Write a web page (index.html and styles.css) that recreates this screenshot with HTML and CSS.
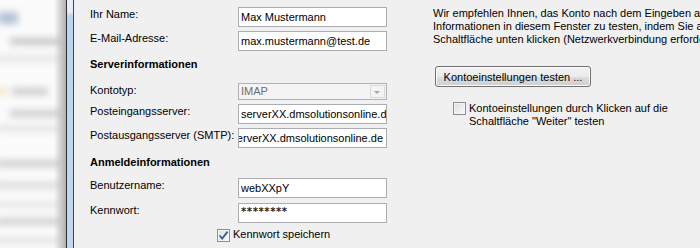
FILE: index.html
```html
<!DOCTYPE html>
<html lang="de">
<head>
    <meta charset="UTF-8">
    <meta name="viewport" content="width=device-width, initial-scale=1.0">
    <title>Kontoeinstellungen</title>
    <link rel="stylesheet" href="styles.css">
</head>
<body>
    <div class="sidebar">
        <div class="blur b1"></div>
        <div class="blur b2"></div>
        <div class="blur b3"></div>
        <div class="blur b4"></div>
        <div class="blur b5"></div>
        <div class="blur b6"></div>
        <div class="blur b7"></div>
        <div class="blur b8"></div>
        <div class="blur b9"></div>
        <div class="blur b10"></div>
        <div class="blur b11"></div>
        <div class="blur b12"></div>
        <div class="edge"></div>
    </div>
    <div class="frame"></div>

    <div class="dialog">
        <div class="form">
            <div class="row first">
                <label>Ihr Name:</label>
                <div class="field">Max Mustermann</div>
            </div>
            <div class="row">
                <label>E-Mail-Adresse:</label>
                <div class="field">max.mustermann@test.de</div>
            </div>

            <h2 class="heading">Serverinformationen</h2>
            <div class="row row-select">
                <label>Kontotyp:</label>
                <div class="combo">
                    <span>IMAP</span>
                    <span class="combo-btn"></span>
                </div>
            </div>
            <div class="row">
                <label>Posteingangsserver:</label>
                <div class="field">serverXX.dmsolutionsonline.de</div>
            </div>
            <div class="row">
                <label>Postausgangsserver (SMTP):</label>
                <div class="field scrolled">serverXX.dmsolutionsonline.de</div>
            </div>

            <h2 class="heading heading-2">Anmeldeinformationen</h2>
            <div class="row row-user">
                <label>Benutzername:</label>
                <div class="field">webXXpY</div>
            </div>
            <div class="row row-pass">
                <label>Kennwort:</label>
                <div class="field password">********</div>
            </div>
            <div class="check-row save">
                <span class="checkbox checked">
                    <svg width="11" height="11" viewBox="0 0 11 11">
                        <path d="M1.5 5.5 L4.2 8.6 L9.6 1.6" fill="none" stroke="#3a5c93" stroke-width="1.8"/>
                    </svg>
                </span>
                <span>Kennwort speichern</span>
            </div>
        </div>

        <div class="test">
            <p class="hint">Wir empfehlen Ihnen, das Konto nach dem Eingeben aller<br>Informationen in diesem Fenster zu testen, indem Sie auf die<br>Schaltfläche unten klicken (Netzwerkverbindung erforderlich).</p>
            <button class="test-btn">Kontoeinstellungen testen ...</button>
            <div class="check-row next">
                <span class="checkbox"></span>
                <span>Kontoeinstellungen durch Klicken auf die<br>Schaltfläche "Weiter" testen</span>
            </div>
        </div>
    </div>
</body>
</html>
```

FILE: styles.css
```css
body {
    margin: 0;
    height: 248px;
    overflow: hidden;
    display: flex;
    background-color: #f0f0f0;
    font-family: 'Liberation Sans', Arial, sans-serif;
    font-size: 11px;
    color: #000;
}

/* blurred window behind the dialog */
.sidebar {
    position: relative;
    width: 66px;
    flex-shrink: 0;
    background-color: #fbfbfb;
    overflow: hidden;
}

.blur {
    position: absolute;
    height: 7px;
    filter: blur(3.5px);
}

.b1 { left: -2px; top: 12px; width: 20px; height: 12px; background-color: #b2c1d3; }
.b2 { left: 10px; top: 38px; width: 60px; background-color: #c6c6c6; }
.b3 { left: -4px; top: 55px; width: 66px; background-color: #e6e6e6; }
.b4 { left: -2px; top: 88px; width: 8px; background-color: #eee2b4; }
.b5 { left: 12px; top: 88px; width: 36px; background-color: #cbcbcb; }
.b6 { left: 10px; top: 110px; width: 60px; background-color: #cdcdcd; }
.b7 { left: -4px; top: 125px; width: 66px; background-color: #e6e6e6; }
.b8 { left: -4px; top: 160px; width: 70px; background-color: #cecece; }
.b9 { left: -4px; top: 182px; width: 70px; background-color: #dcdcdc; }
.b10 { left: -4px; top: 201px; width: 66px; background-color: #e8e8e8; }
.b11 { left: -4px; top: 218px; width: 70px; background-color: #d0d0d0; }
.b12 { left: -4px; top: 237px; width: 66px; background-color: #e4e4e4; }

.edge {
    position: absolute;
    right: 0;
    top: 0;
    bottom: 0;
    width: 12px;
    background: linear-gradient(to right, rgba(215, 215, 215, 0), #c2c2c2 75%, #b0b0b0);
}

.frame {
    width: 6px;
    flex-shrink: 0;
    border-left: 1px solid #2e2e2e;
    border-right: 1px solid #3c4654;
    background: linear-gradient(to bottom, #e6eef8 0, #e6eef8 12px, #bcd4ef 16px, #c2d8f1 100%);
}

.dialog {
    display: flex;
    padding-left: 16px;
}

.form {
    width: 297px;
    flex-shrink: 0;
}

.row {
    display: grid;
    grid-template-columns: 148px 149px;
    margin-top: 4px;
    line-height: 13px;
}

.row.first {
    margin-top: 7px;
}

.row label {
    padding-top: 1px;
}

.field {
    box-sizing: border-box;
    height: 20px;
    padding: 0 2px;
    border: 1px solid #abadb3;
    background-color: #fff;
    line-height: 18px;
    white-space: nowrap;
    overflow: hidden;
}

.field.scrolled {
    display: flex;
    justify-content: flex-end;
    padding-right: 3px;
}

.field.password {
    font-family: 'DejaVu Sans', sans-serif;
    font-weight: bold;
    font-size: 10px;
    letter-spacing: 0.6px;
    line-height: 16px;
    color: #222;
}

.heading {
    margin: 5px 0 0;
    height: 16px;
    font-size: 11px;
    font-weight: bold;
    line-height: 16px;
}

.heading-2 {
    margin-top: 6px;
}

.row-select {
    margin-top: 11px;
}

.combo {
    box-sizing: border-box;
    height: 17px;
    display: flex;
    justify-content: space-between;
    padding-left: 2px;
    border: 1px solid #adb2b5;
    background-color: #f4f4f4;
    color: #6d6d6d;
    line-height: 15px;
}

.combo-btn {
    position: relative;
    width: 15px;
    margin: 1px;
    border: 1px solid #d9d9d9;
    box-sizing: border-box;
}

.combo-btn::after {
    content: "";
    position: absolute;
    left: 3px;
    top: 5px;
    border-left: 3.5px solid transparent;
    border-right: 3.5px solid transparent;
    border-top: 3.5px solid #a7a7a7;
}

.row-user {
    margin-top: 8px;
}

.row-pass {
    margin-top: 5px;
}

.check-row {
    display: flex;
    align-items: flex-start;
    gap: 3px;
    line-height: 13px;
}

.check-row.save {
    margin-top: 5px;
    padding-left: 127px;
}

.checkbox {
    box-sizing: border-box;
    width: 13px;
    height: 13px;
    flex-shrink: 0;
    display: flex;
    align-items: center;
    justify-content: center;
    border: 1px solid #8e8f8f;
    background: linear-gradient(135deg, #dcdcdc, #fbfbfb);
    box-shadow: inset 0 0 0 1px #f4f4f4;
}

.check-row.save .checkbox {
    margin-top: 1px;
}

.test {
    padding-left: 46px;
    white-space: nowrap;
}

.hint {
    margin: 7px 0 0;
    line-height: 13px;
}

.test-btn {
    display: block;
    box-sizing: border-box;
    width: 156px;
    height: 21px;
    margin: 20px 0 0 2px;
    padding: 0;
    font-family: inherit;
    font-size: 11px;
    color: #000;
    border: 1px solid #707070;
    border-radius: 3px;
    background: linear-gradient(to bottom, #f2f2f2 0, #ebebeb 50%, #dddddd 50%, #cfcfcf 100%);
    box-shadow: inset 0 0 0 1px #fcfcfc;
}

.check-row.next {
    margin-top: 15px;
    padding-left: 20px;
}
```
